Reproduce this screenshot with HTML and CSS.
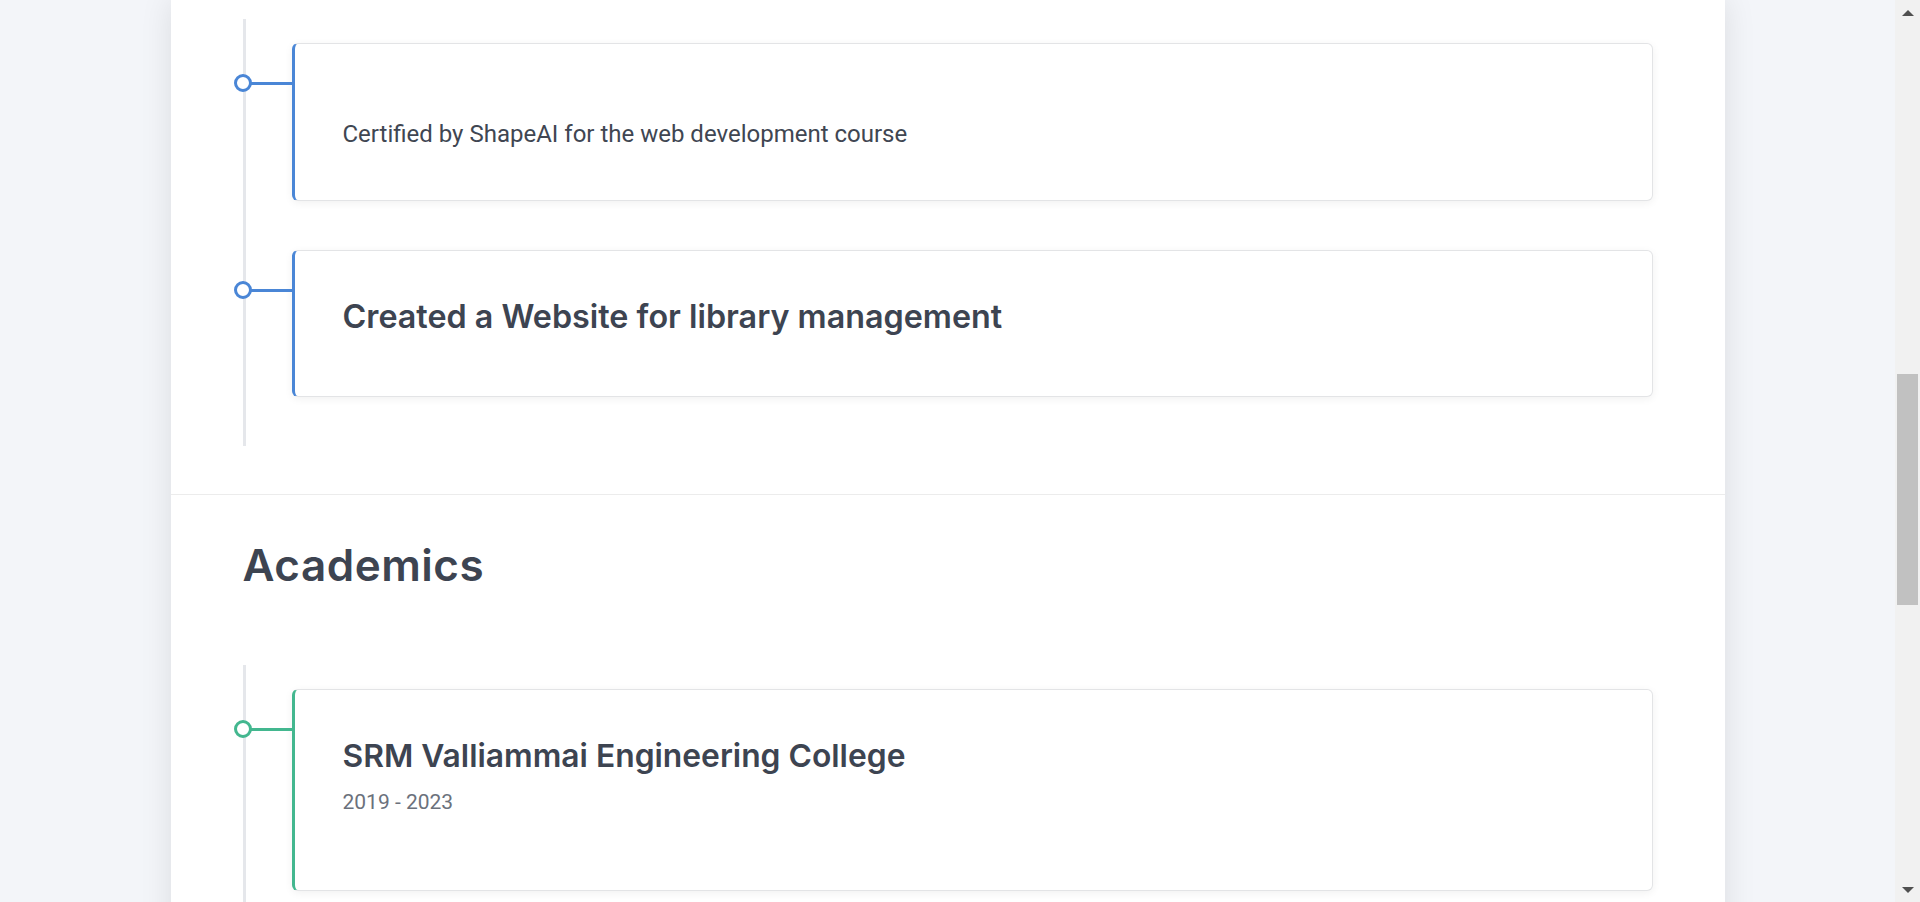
FILE: index.html
```html
<!DOCTYPE html>
<html lang="en">
<head>
<meta charset="utf-8">
<title>Experience &amp; Academics</title>
<link rel="stylesheet" href="styles.css">
</head>
<body>
<div class="window">
  <main class="viewport">
    <div class="container">
      <section class="section section--first">
        <ol class="timeline timeline--blue">
          <li class="item">
            <div class="card">
              <p class="card-text card-text--solo">Certified by ShapeAI for the web development course</p>
            </div>
          </li>
          <li class="item">
            <div class="card">
              <h3 class="card-title">Created a Website for library management</h3>
            </div>
          </li>
        </ol>
      </section>
      <section class="section">
        <h2 class="section-title">Academics</h2>
        <ol class="timeline timeline--green">
          <li class="item">
            <div class="card">
              <h3 class="card-title card-title--tight">SRM Valliammai Engineering College</h3>
              <p class="card-date">2019 - 2023</p>
            </div>
          </li>
        </ol>
      </section>
    </div>
  </main>
  <div class="scrollbar" aria-hidden="true">
    <div class="sb-btn"><span class="sb-arrow sb-arrow--up"></span></div>
    <div class="sb-track"><div class="sb-thumb"></div></div>
    <div class="sb-btn"><span class="sb-arrow sb-arrow--down"></span></div>
  </div>
</div>
</body>
</html>
```

FILE: styles.css
```css
html, body {
  margin: 0;
  height: 100%;
  overflow: hidden;
}

body {
  background: #f3f5f9;
  font-family: Roboto, "Liberation Sans", Arial, sans-serif;
  color: #3d4451;
}

.window {
  display: flex;
  height: 902px;
}

.viewport {
  flex: 1;
  min-width: 0;
  overflow: hidden;
}

.container {
  width: 1554px;
  min-height: 100%;
  margin: 0 auto;
  background: #fff;
  box-shadow: 0 0 30px rgba(0, 0, 0, 0.1);
}

.section {
  padding: 46px 72px 48px;
  border-bottom: 1px solid #ececec;
}

.section--first {
  padding-top: 19px;
}

.section-title {
  margin: 0 0 75px;
  font-family: Inter, "Noto Sans", sans-serif;
  font-weight: 600;
  font-size: 44px;
  line-height: 49px;
  letter-spacing: 0.5px;
  color: #3d4451;
}

.timeline {
  list-style: none;
  margin: 0;
  padding: 24px 0 49px 46px;
  border-left: 3px solid #e5e7eb;
}

.timeline--blue { --accent: #4a86d6; }
.timeline--green { --accent: #43b78f; }

.item {
  position: relative;
  margin-bottom: 49px;
}

.item:last-child {
  margin-bottom: 0;
}

.item::before {
  content: "";
  position: absolute;
  left: -58px;
  top: 31px;
  width: 18px;
  height: 18px;
  box-sizing: border-box;
  border: 3px solid var(--accent);
  border-radius: 50%;
  background: #fff;
  z-index: 1;
}

.item::after {
  content: "";
  position: absolute;
  left: -41px;
  top: 39px;
  width: 41px;
  height: 3px;
  background: var(--accent);
}

.card {
  padding: 48px;
  background: #fff;
  border: 1px solid #e3e4e6;
  border-left: 3px solid var(--accent);
  border-radius: 6px;
  box-shadow: 0 2px 8px rgba(0, 0, 0, 0.06);
}

.card-title {
  margin: 0 0 14px;
  font-family: Inter, "Noto Sans", sans-serif;
  font-weight: 600;
  font-size: 32.3px;
  line-height: 35px;
  color: #3d4451;
}

.card-title--tight {
  margin-bottom: 11px;
  font-size: 31.8px;
  line-height: 35px;
}

.card-text {
  margin: 0;
  font-size: 24px;
  line-height: 36px;
  color: #404652;
}

.card-text--solo {
  margin-top: 24px;
}

.card-date {
  margin: 0 0 22px;
  font-size: 21px;
  line-height: 36px;
  color: #6b717c;
}

.scrollbar {
  width: 25px;
  flex: none;
  display: flex;
  flex-direction: column;
  background: #f1f1f1;
}

.sb-btn {
  height: 25px;
  display: flex;
  align-items: center;
  justify-content: center;
}

.sb-arrow {
  width: 0;
  height: 0;
  border-left: 6px solid transparent;
  border-right: 6px solid transparent;
}

.sb-arrow--up {
  border-bottom: 6px solid #505050;
}

.sb-arrow--down {
  border-top: 6px solid #505050;
}

.sb-track {
  flex: 1;
  display: flex;
  justify-content: center;
}

.sb-thumb {
  width: 21px;
  height: 231px;
  margin-top: 349px;
  background: #c1c1c1;
}
```
